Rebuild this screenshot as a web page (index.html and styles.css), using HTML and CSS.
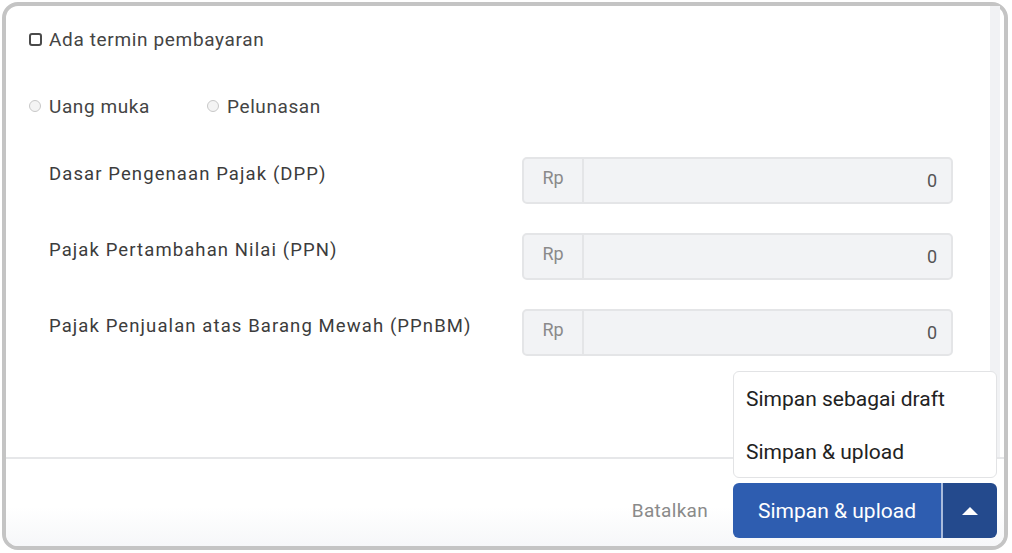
FILE: index.html
```html
<!DOCTYPE html>
<html>
<head>
<meta charset="utf-8">
<link rel="stylesheet" href="styles.css">
</head>
<body>
<div class="frame">
  <div class="main">
    <div class="content">
      <label class="check-row">
        <span class="checkbox"></span>
        <span class="check-text">Ada termin pembayaran</span>
      </label>
      <div class="radio-row">
        <label class="radio-item radio-first"><span class="radio"></span><span>Uang muka</span></label>
        <label class="radio-item"><span class="radio"></span><span>Pelunasan</span></label>
      </div>
      <div class="fields">
        <div class="field">
          <div class="field-label">Dasar Pengenaan Pajak (DPP)</div>
          <div class="input-group"><span class="addon">Rp</span><span class="value">0</span></div>
        </div>
        <div class="field">
          <div class="field-label">Pajak Pertambahan Nilai (PPN)</div>
          <div class="input-group"><span class="addon">Rp</span><span class="value">0</span></div>
        </div>
        <div class="field">
          <div class="field-label">Pajak Penjualan atas Barang Mewah (PPnBM)</div>
          <div class="input-group"><span class="addon">Rp</span><span class="value">0</span></div>
        </div>
      </div>
    </div>
    <div class="track"></div>
  </div>
  <div class="divider"></div>
  <div class="footer">
    <span class="cancel">Batalkan</span>
    <div class="split">
      <div class="menu">
        <div class="menu-item">Simpan sebagai draft</div>
        <div class="menu-item">Simpan &amp; upload</div>
      </div>
      <span class="split-main">Simpan &amp; upload</span>
      <span class="split-toggle"><span class="caret"></span></span>
    </div>
  </div>
</div>
</body>
</html>
```
FILE: styles.css
```css
html, body {
  margin: 0;
  padding: 0;
  background: #ffffff;
}
body {
  width: 1012px;
  height: 553px;
  overflow: hidden;
  font-family: Roboto, "Liberation Sans", sans-serif;
}
.frame {
  box-sizing: border-box;
  width: 1006px;
  height: 548px;
  margin: 2px 0 0 2px;
  border: 4px solid #c4c4c4;
  border-radius: 16px;
  display: flex;
  flex-direction: column;
  background: #fff;
}
.main {
  height: 451px;
  display: flex;
}
.content {
  flex: 1;
  padding: 26px 0 0 23px;
}
.track {
  width: 10px;
  margin-right: 4px;
  background: #f1f2f4;
}
.check-row {
  display: flex;
  align-items: center;
  height: 14px;
  gap: 7px;
}
.checkbox {
  box-sizing: border-box;
  width: 13px;
  height: 13px;
  border: 2px solid #4a4a4a;
  border-radius: 3px;
}
.check-text {
  font-size: 19px;
  color: #444;
  letter-spacing: 0.65px;
}
.radio-row {
  display: flex;
  align-items: center;
  margin-top: 53px;
  height: 14px;
}
.radio-item {
  display: flex;
  align-items: center;
  gap: 8px;
  font-size: 19px;
  color: #444;
  letter-spacing: 0.6px;
}
.radio-first {
  width: 178px;
}
.radio {
  box-sizing: border-box;
  width: 12px;
  height: 12px;
  border: 1px solid #c8c8c8;
  border-radius: 50%;
  background: #f4f4f4;
}
.fields {
  margin-top: 44px;
  padding-left: 20px;
  display: flex;
  flex-direction: column;
  gap: 29px;
}
.field {
  display: flex;
  align-items: flex-start;
}
.field-label {
  width: 473px;
  padding-top: 6px;
  font-size: 18.5px;
  line-height: 22px;
  letter-spacing: 1.1px;
  color: #3c3c3c;
}
.input-group {
  box-sizing: border-box;
  width: 431px;
  height: 47px;
  display: flex;
  align-items: center;
  background: #f2f3f5;
  border: 2px solid #e4e5e7;
  border-radius: 5px;
}
.addon {
  box-sizing: border-box;
  width: 60px;
  height: 100%;
  display: flex;
  align-items: center;
  justify-content: center;
  border-right: 2px solid #e4e5e7;
  font-size: 18px;
  color: #8a8a8a;
  padding-bottom: 6px;
}
.value {
  flex: 1;
  text-align: right;
  padding-right: 14px;
  font-size: 18px;
  color: #555;
}
.divider {
  height: 2px;
  background: #e6e7e9;
}
.footer {
  flex: 1;
  display: flex;
  justify-content: flex-end;
  align-items: flex-end;
  padding: 0 7px 8px 0;
  background: linear-gradient(#ffffff 55%, #f6f7f9);
  border-radius: 0 0 12px 12px;
}
.cancel {
  font-size: 19px;
  color: #8a8a8a;
  letter-spacing: 0.3px;
  margin-right: 25px;
  line-height: 55px;
}
.split {
  position: relative;
  display: flex;
  height: 55px;
  width: 264px;
  border-radius: 6px;
}
.split-main {
  width: 208px;
  display: flex;
  align-items: center;
  justify-content: center;
  background: #2e5db0;
  color: #fff;
  font-size: 21px;
  border-radius: 6px 0 0 6px;
  border-right: 2px solid #a9bbdc;
}
.split-toggle {
  flex: 1;
  display: flex;
  align-items: center;
  justify-content: center;
  background: #244a8d;
  border-radius: 0 6px 6px 0;
}
.caret {
  width: 0;
  height: 0;
  border-left: 8px solid transparent;
  border-right: 8px solid transparent;
  border-bottom: 8px solid #fff;
  margin-left: -1px;
}
.menu {
  position: absolute;
  left: 0;
  right: 0;
  bottom: calc(100% + 5px);
  box-sizing: border-box;
  height: 107px;
  background: #fff;
  border: 1px solid #e2e3e5;
  border-radius: 6px;
  padding-top: 2px;
}
.menu-item {
  height: 53px;
  line-height: 50px;
  padding-left: 12px;
  font-size: 21px;
  color: #222;
}
```
